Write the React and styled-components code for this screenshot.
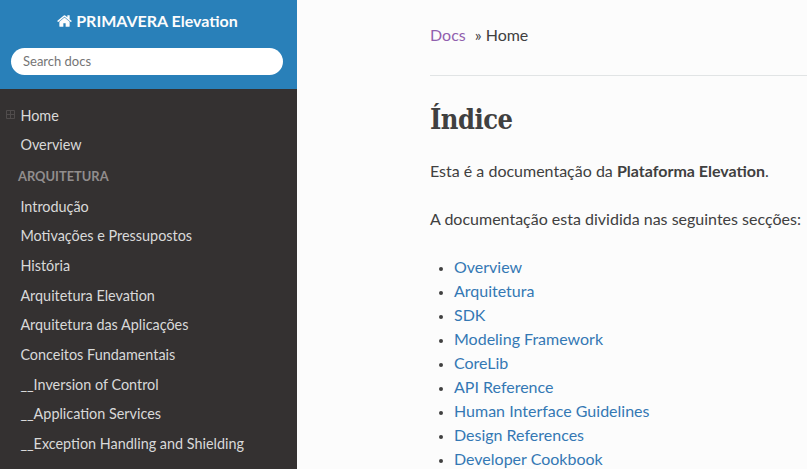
import React from 'react';
import styled, { createGlobalStyle } from 'styled-components';

const GlobalStyle = createGlobalStyle`
  * { box-sizing: border-box; }
  html, body { margin: 0; height: 100%; overflow: hidden; }
  body { font-family: Lato, "Open Sans", sans-serif; font-size: 16px; color: #404040; background: #fcfcfc; }
  h1, p, ul { margin: 0; padding: 0; }
`;

const Page = styled.div`
  display: flex;
  width: 807px;
  height: 469px;
  overflow: hidden;
`;

const Sidebar = styled.nav`
  flex: 0 0 297px;
  background: #343131;
`;

const SearchHeader = styled.header`
  height: 89px;
  padding: 8px 13px 0 11px;
  background: #2980b9;
`;

const Brand = styled.a`
  display: flex;
  justify-content: center;
  align-items: center;
  gap: 4px;
  height: 24px;
  margin-bottom: 16px;
  color: #fcfcfc;
  font-size: 16px;
  font-weight: 700;
  white-space: nowrap;
  svg { margin-top: 2px; }
`;

const SearchInput = styled.input`
  display: block;
  width: 272px;
  height: 27px;
  padding: 0 12px 2px;
  border: 0;
  border-radius: 50px;
  background: #fff;
  font-family: inherit;
  font-size: 13px;
  outline: none;
  &::placeholder { color: #757575; }
`;

const Menu = styled.ul`
  list-style: none;
  padding-top: 11.4px;
`;

const MenuItem = styled.li`
  display: flex;
  align-items: center;
  height: 29.64px;
  padding-left: 6px;
  color: #d9d9d9;
  font-size: 14.4px;
  white-space: nowrap;
`;

const ToggleSlot = styled.span`
  display: flex;
  width: 14.4px;
`;

const Caption = styled.li`
  height: 31.8px;
  padding-left: 18px;
  color: #918d8d;
  font-size: 12.9px;
  font-weight: 700;
  line-height: 32px;
`;

const Content = styled.main`
  flex: 1;
  min-width: 0;
  padding: 23px 0 0 133px;
  line-height: 24px;
  white-space: nowrap;
`;

const Breadcrumbs = styled.div`
  display: flex;
  gap: 9px;
  height: 53px;
  border-bottom: 1px solid #e1e4e5;
`;

const Visited = styled.a`
  color: #9160ae;
`;

const Title = styled.h1`
  margin: 24px 0 21px;
  height: 38px;
  font-family: "Roboto Slab", "DejaVu Serif Condensed", "DejaVu Serif", serif;
  font-size: 27px;
  font-stretch: condensed;
  letter-spacing: -0.5px;
  line-height: 39px;
`;

const Paragraph = styled.p`
  margin-bottom: 24px;
`;

const Sections = styled.ul`
  padding-left: 24px;
  list-style: none;
`;

const Section = styled.li`
  display: flex;
  align-items: center;
  &::before {
    content: "";
    width: 4px;
    height: 4px;
    margin: 3px 11px 0 -15px;
    border-radius: 50%;
    background: #404040;
  }
`;

const Link = styled.a`
  color: #3478b4;
`;

const HomeIcon = () => (
  <svg width="15" height="16" viewBox="0 0 1664 1792" fill="currentColor">
    <path d="M1408 992v480q0 26-19 45t-45 19h-384v-384h-256v384h-384q-26 0-45-19t-19-45v-480q0-1 .5-3t.5-3l575-474 575 474q1 2 1 6zm223-69l-62 74q-8 9-21 11h-3q-13 0-21-7l-692-577-692 577q-12 8-24 7-13-2-21-11l-62-74q-8-10-7-23.5t11-21.5l719-599q32-26 76-26t76 26l244 204v-195q0-14 9-23t23-9h192q14 0 23 9t9 23v408l219 182q10 8 11 21.5t-7 23.5z" />
  </svg>
);

const PlusIcon = () => (
  <svg width="10" height="10" viewBox="0 0 10 10" fill="none" stroke="#504c4c">
    <path d="M.5 .5h8v8h-8zM1 4.5h7M4.5 1v7" />
  </svg>
);

const general = ['Home', 'Overview'];
const architecture = [
  'Introdução', 'Motivações e Pressupostos', 'História', 'Arquitetura Elevation',
  'Arquitetura das Aplicações', 'Conceitos Fundamentais', '__Inversion of Control',
  '__Application Services', '__Exception Handling and Shielding',
];
const sections = [
  'Overview', 'Arquitetura', 'SDK', 'Modeling Framework', 'CoreLib', 'API Reference',
  'Human Interface Guidelines', 'Design References', 'Developer Cookbook',
];

export default function App() {
  return (
    <Page>
      <GlobalStyle />
      <Sidebar>
        <SearchHeader>
          <Brand><HomeIcon />PRIMAVERA Elevation</Brand>
          <SearchInput placeholder="Search docs" />
        </SearchHeader>
        <Menu>
          {general.map((name, i) => (
            <MenuItem key={name}><ToggleSlot>{i === 0 && <PlusIcon />}</ToggleSlot>{name}</MenuItem>
          ))}
          <Caption>ARQUITETURA</Caption>
          {architecture.map((name) => (
            <MenuItem key={name}><ToggleSlot />{name}</MenuItem>
          ))}
        </Menu>
      </Sidebar>
      <Content>
        <Breadcrumbs><Visited>Docs</Visited><span>» Home</span></Breadcrumbs>
        <Title>Índice</Title>
        <Paragraph>Esta é a documentação da <strong>Plataforma Elevation</strong>.</Paragraph>
        <Paragraph>A documentação esta dividida nas seguintes secções:</Paragraph>
        <Sections>
          {sections.map((name) => <Section key={name}><Link>{name}</Link></Section>)}
        </Sections>
      </Content>
    </Page>
  );
}
